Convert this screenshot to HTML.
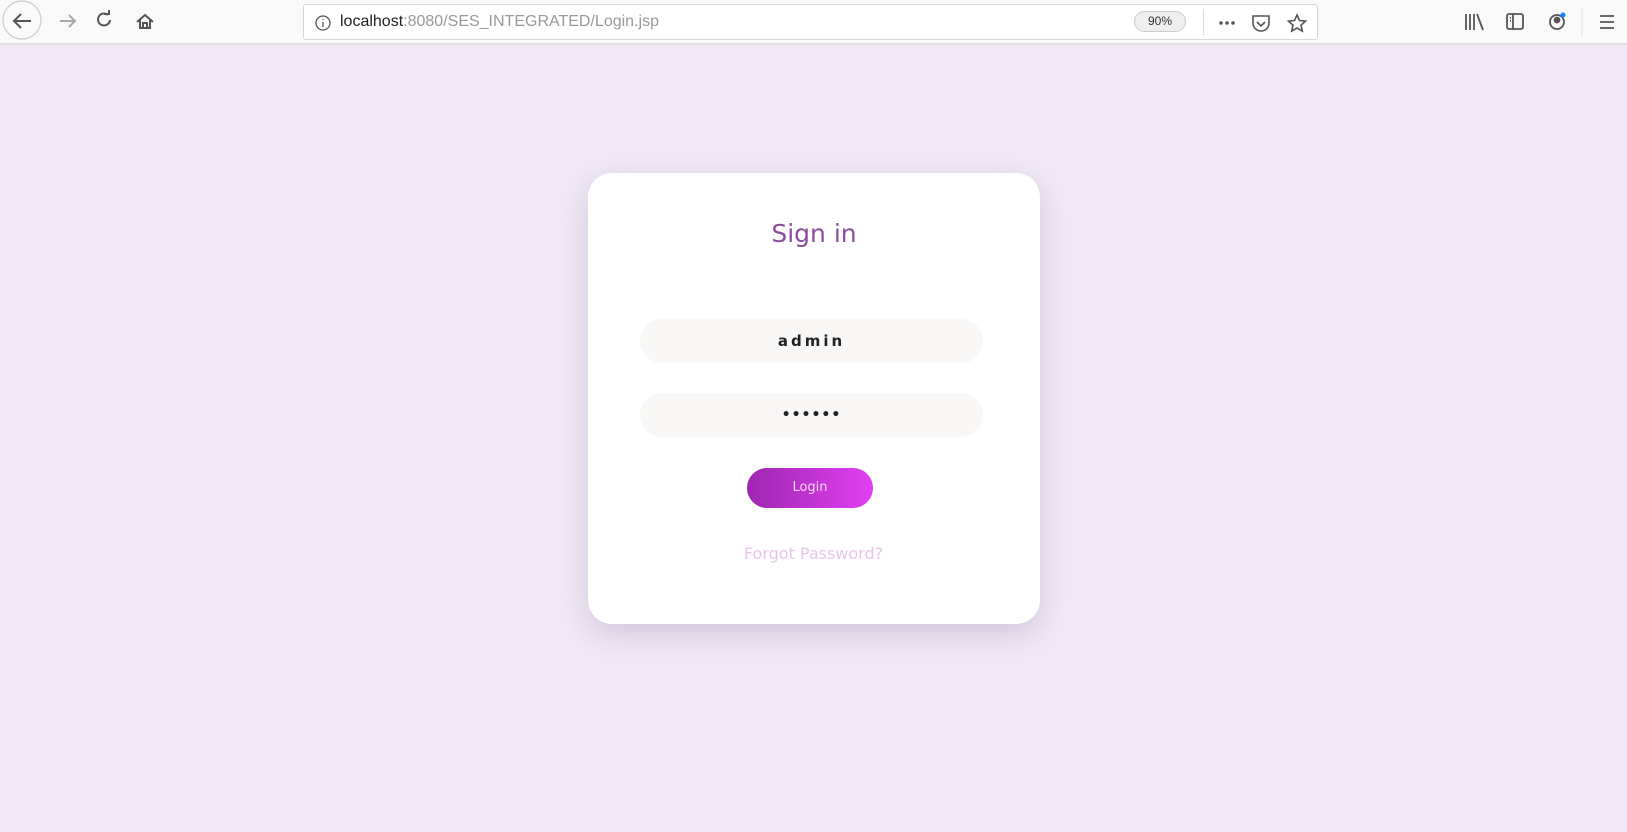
<!DOCTYPE html>
<html><head><meta charset="utf-8"><style>
*{margin:0;padding:0;box-sizing:border-box}
body{width:1627px;height:832px;background:#f1e9f6;font-family:"Liberation Sans","DejaVu Sans",sans-serif;position:relative;overflow:hidden}
.tb{position:absolute;left:0;top:0;width:1627px;height:45px;background:#f9f9fa;border-bottom:2px solid #e2e0e6}
.url{position:absolute;left:303px;top:4px;width:1015px;height:36px;background:#fff;border:1px solid #d7d7db;border-radius:3px}
.ic{position:absolute}
.card{position:absolute;left:588px;top:173px;width:452px;height:451px;background:#fff;border-radius:24px;box-shadow:0 10px 30px rgba(120,90,140,.25)}
.h{position:absolute;left:0;width:100%;text-align:center;font-size:25px;color:#8c4d9f;font-family:"DejaVu Sans",sans-serif}
.inp{position:absolute;left:640px;width:343px;height:44px;background:#f8f7f6;border-radius:22px;text-align:center;line-height:44px;color:#222;font-size:15px;font-weight:bold;letter-spacing:3px;font-family:"DejaVu Sans",sans-serif}
.btn{position:absolute;left:747px;top:468px;width:126px;height:40px;border-radius:20px;background:linear-gradient(90deg,#9c27b0,#e23ff2);color:#f3d8f5;font-size:13px;text-align:center;line-height:40px;font-family:"DejaVu Sans",sans-serif}
.fp{position:absolute;left:0;width:1627px;top:544px;text-align:center;font-size:16px;color:#e6c6e8;font-family:"DejaVu Sans",sans-serif}
</style></head><body>
<div class="tb">
<svg class="ic" style="left:0;top:0" width="300" height="44" fill="none" stroke="#555" stroke-width="2">
<circle cx="22" cy="20" r="19" stroke="#ccc" stroke-width="1.2" fill="#fafafa"/>
<path d="M31 21H14M21 14l-7 7 7 7"/>
<path d="M60 21h15M69 15l6 6-6 6" stroke="#aaa"/>
<path d="M108 15a6 6 0 1 0 2 5M104 14h5v-4" />
<path d="M137 22l8-7 8 7M140 20v8h10v-8M143 28v-5h4v5"/>
</svg>
<div class="url">
<svg class="ic" style="left:10px;top:9px" width="18" height="18" fill="none" stroke="#555" stroke-width="1.3"><circle cx="9" cy="9" r="7"/><path d="M9 8v5M9 5v1"/></svg>
<div style="position:absolute;left:36px;top:8px;font-size:16px;color:#999;white-space:nowrap"><span style="color:#222">localhost</span>:8080/SES_INTEGRATED/Login.jsp</div>
<div style="position:absolute;left:830px;top:6px;width:52px;height:21px;border:1px solid #ccc;border-radius:11px;background:#eee;font-size:12px;text-align:center;line-height:19px;color:#333">90%</div>
<div style="position:absolute;left:899px;top:4px;width:1px;height:26px;background:#ddd"></div>
<svg class="ic" style="left:912px;top:7px" width="100" height="22" fill="none" stroke="#555" stroke-width="1.6">
<circle cx="5" cy="11" r="1" fill="#555"/><circle cx="11" cy="11" r="1" fill="#555"/><circle cx="17" cy="11" r="1" fill="#555"/>
<path d="M37 4h16v7a8 8 0 0 1-16 0z M41 10l4 4 4-4"/>
<path d="M81 3l2.5 5.5 6 .6-4.5 4 1.3 6-5.3-3-5.3 3 1.3-6-4.5-4 6-.6z"/>
</svg>
</div>
<svg class="ic" style="left:1460px;top:8px" width="167" height="28" fill="none" stroke="#555" stroke-width="1.8">
<path d="M6 6v16M10 6v16M14 6v16M17 6l6 16"/>
<rect x="47" y="6" width="16" height="15" rx="2"/><path d="M53 6v15M50 10h1M50 13h1"/>
<circle cx="97" cy="14" r="7"/><circle cx="97" cy="12" r="2.5" fill="#555"/><circle cx="103" cy="7" r="2.5" fill="#0a84ff" stroke="none"/>
<path d="M122 0v30" stroke="#e0e0e0" stroke-width="1"/>
<path d="M140 8h14M140 14h14M140 20h14"/>
</svg>
</div>
<div class="card"><div class="h" style="top:46px">Sign in</div></div>
<div class="inp" style="top:319px">admin</div>
<div class="inp" style="top:393px;font-size:14px;letter-spacing:1px">••••••</div>
<div class="btn">Login</div>
<div class="fp">Forgot Password?</div>
</body></html>
